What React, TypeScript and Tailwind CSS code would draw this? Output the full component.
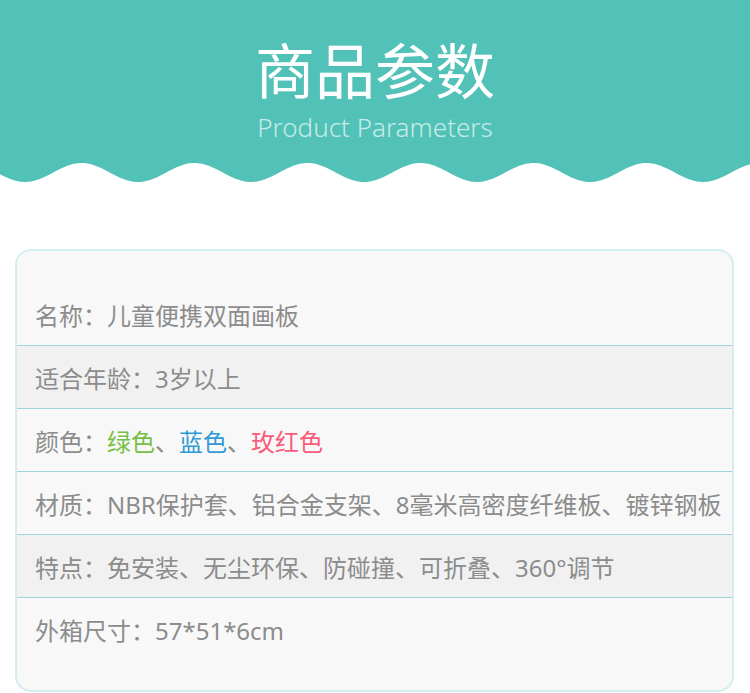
import React from 'react';

const cjk = { fontFamily: '"Noto Sans", "Noto Sans CJK SC", sans-serif' };

// wave edge under the header, teal above / white below
function Wave() {
  const pts: string[] = [];
  for (let x = 0; x <= 750; x += 2) {
    const y = 10.5 + 9.5 * Math.cos((2 * Math.PI * (x - 25)) / 113);
    pts.push(`${x},${y.toFixed(2)}`);
  }
  const d = `M0,0 L${pts.join(' L')} L750,0 Z`;
  return (
    <svg width="750" height="21" viewBox="0 0 750 21" className="block">
      <path d={d} fill="#52c1b8" />
    </svg>
  );
}

interface Row {
  label: string;
  value: React.ReactNode;
  shade?: boolean;
}

const rows: Row[] = [
  { label: '名称：', value: '儿童便携双面画板' },
  { label: '适合年龄：', value: '3岁以上', shade: true },
  {
    label: '颜色：',
    value: (
      <>
        <span className="text-[#77bf45]">绿色</span>、
        <span className="text-[#2f9ad6]">蓝色</span>、
        <span className="text-[#fb5b7a]">玫红色</span>
      </>
    ),
  },
  { label: '材质：', value: 'NBR保护套、铝合金支架、8毫米高密度纤维板、镀锌钢板' },
  { label: '特点：', value: '免安装、无尘环保、防碰撞、可折叠、360°调节', shade: true },
  { label: '外箱尺寸：', value: '57*51*6cm' },
];

export default function App() {
  return (
    <div className="w-[750px] min-h-[693px] bg-white" style={cjk}>
      {/* Header */}
      <div className="h-[162px] bg-[#52c1b8] flex flex-col items-center pt-[36px]">
        <h1 className="text-[60px] leading-[70px] text-white">商品参数</h1>
        <p className="mt-[4px] text-[26px] leading-[34px] font-light text-[#c6ece6]">Product Parameters</p>
      </div>
      <Wave />

      {/* Parameter card */}
      <div className="mt-[66px] ml-[15px] mr-[16px] rounded-[16px] border-2 border-[#d3eef0] bg-[#f8f8f8] pt-[32px] pb-[29px] overflow-hidden">
        {rows.map((r, i) => (
          <div
            key={i}
            className={
              'h-[63px] flex items-center pt-[3px] pl-[18px] text-[24px] leading-none text-[#8c8c8c] whitespace-nowrap ' +
              (i < rows.length - 1 ? 'border-b border-[#9fd4d9] ' : '') +
              (r.shade ? 'bg-[#f1f1f1]' : 'bg-[#f8f8f8]')
            }
          >
            <span>{r.label}</span>
            <span>{r.value}</span>
          </div>
        ))}
      </div>
    </div>
  );
}
